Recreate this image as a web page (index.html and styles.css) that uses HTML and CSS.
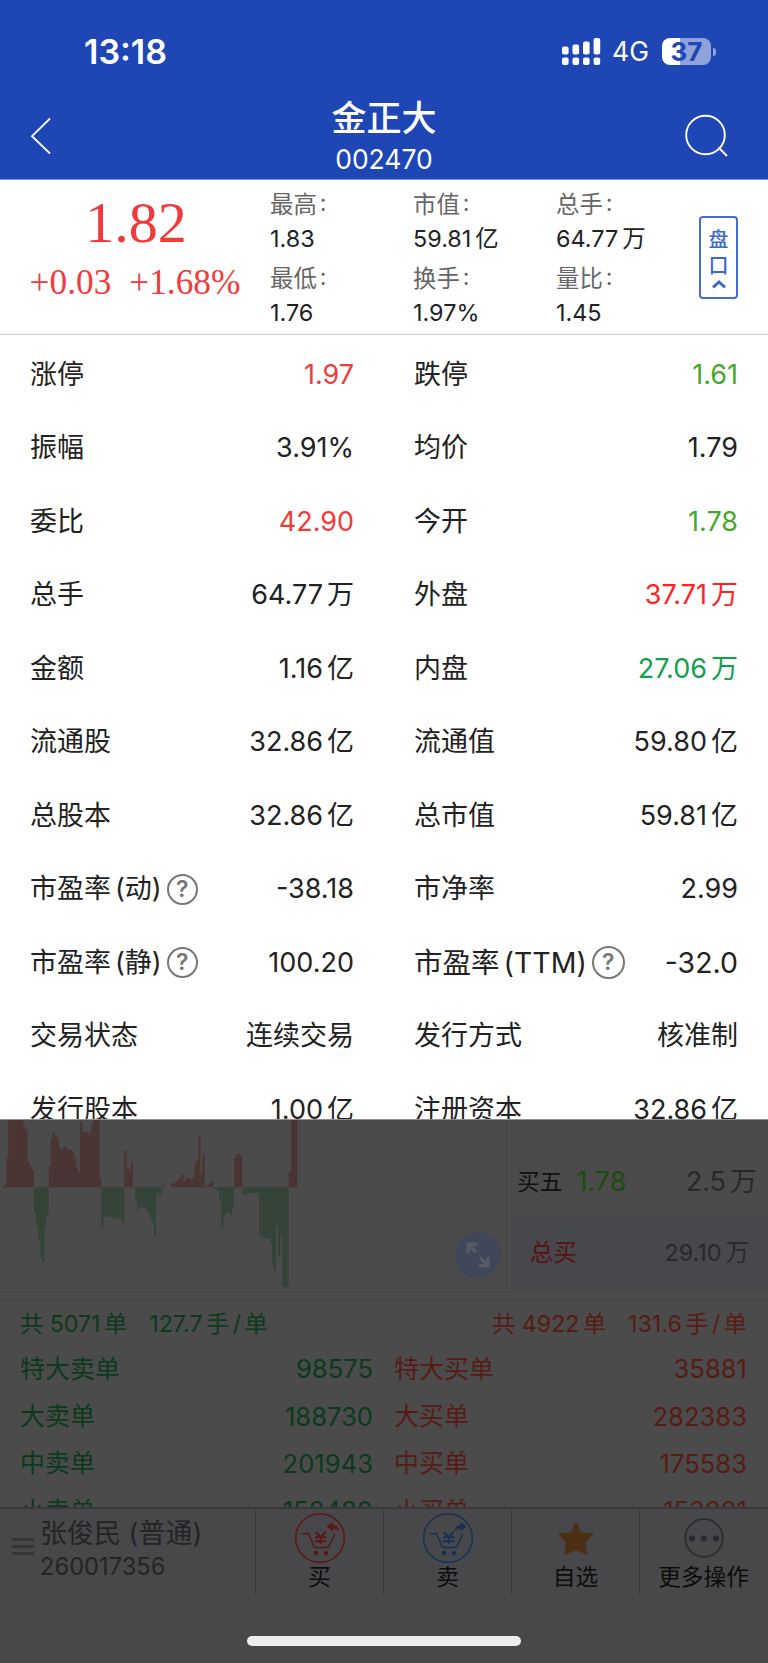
FILE: index.html
```html
<!DOCTYPE html>
<html lang="zh-CN">
	<head>
		<title>金正大 002470</title>
		<meta charset="utf-8">
		<link rel="stylesheet" href="styles.css">
	</head>
	<body>
		<header>
			<div class="status">
				<span class="clock">13:18</span>
				<div class="statusRight">
					<svg class="signal" width="39" height="28" viewBox="0 0 39 28" fill="#fff">
						<rect x="0" y="8.5" width="6.6" height="8" rx="2"/>
						<rect x="10.5" y="6.5" width="6.6" height="10" rx="2"/>
						<rect x="21" y="3.5" width="6.6" height="13" rx="2"/>
						<rect x="31.6" y="0" width="6.6" height="16.5" rx="2"/>
						<rect x="0" y="19.5" width="6.6" height="7.5" rx="2"/>
						<rect x="10.5" y="19.5" width="6.6" height="7.5" rx="2"/>
						<rect x="21" y="19.5" width="6.6" height="7.5" rx="2"/>
						<rect x="31.6" y="19.5" width="6.6" height="7.5" rx="2"/>
					</svg>
					<span class="net">4G</span>
					<div class="battery">37</div>
					<span class="nub"></span>
				</div>
			</div>
			<div class="nav">
				<svg width="24" height="42" viewBox="0 0 24 42" fill="none" stroke="#fff" stroke-width="1.8"><path d="M21 3.5L3 21.2L21 38.5"/></svg>
				<div class="title">
					<h1>金正大</h1>
					<p>002470</p>
				</div>
				<svg width="44" height="44" viewBox="0 0 44 44" fill="none" stroke="#fff" stroke-width="1.9"><circle cx="21.5" cy="21" r="19.3"/><path d="M34.5 33.5L43 42"/></svg>
			</div>
		</header>

		<section class="summary">
			<div class="price">
				<p class="last">1.82</p>
				<p class="change"><span>+0.03</span><span>+1.68%</span></p>
			</div>
			<div class="stats">
				<div><label>最高<i>:</i></label><b>1.83</b></div>
				<div><label>市值<i>:</i></label><b>59.81<u>亿</u></b></div>
				<div><label>总手<i>:</i></label><b>64.77<u>万</u></b></div>
				<div><label>最低<i>:</i></label><b>1.76</b></div>
				<div><label>换手<i>:</i></label><b>1.97%</b></div>
				<div><label>量比<i>:</i></label><b>1.45</b></div>
			</div>
			<div class="toggle">
				<span>盘</span>
				<span>口</span>
				<svg width="16" height="10" viewBox="0 0 16 10" fill="none" stroke="#3c69cb" stroke-width="3"><path d="M2 8.3L8 3L14 8.3"/></svg>
			</div>
		</section>

		<section class="detail">
			<div class="row"><span>涨停</span><b class="red">1.97</b></div>
			<div class="row"><span>跌停</span><b class="lime">1.61</b></div>
			<div class="row"><span>振幅</span><b>3.91%</b></div>
			<div class="row"><span>均价</span><b>1.79</b></div>
			<div class="row"><span>委比</span><b class="red">42.90</b></div>
			<div class="row"><span>今开</span><b class="lime">1.78</b></div>
			<div class="row"><span>总手</span><b>64.77<u>万</u></b></div>
			<div class="row"><span>外盘</span><b class="red2">37.71<u>万</u></b></div>
			<div class="row"><span>金额</span><b>1.16<u>亿</u></b></div>
			<div class="row"><span>内盘</span><b class="green">27.06<u>万</u></b></div>
			<div class="row"><span>流通股</span><b>32.86<u>亿</u></b></div>
			<div class="row"><span>流通值</span><b>59.80<u>亿</u></b></div>
			<div class="row"><span>总股本</span><b>32.86<u>亿</u></b></div>
			<div class="row"><span>总市值</span><b>59.81<u>亿</u></b></div>
			<div class="row"><span>市盈率<u>(动)</u></span><em class="help">?</em><b>-38.18</b></div>
			<div class="row"><span>市净率</span><b>2.99</b></div>
			<div class="row"><span>市盈率<u>(静)</u></span><em class="help">?</em><b>100.20</b></div>
			<div class="row big"><span>市盈率<u>(TTM)</u></span><em class="help">?</em><b>-32.0</b></div>
			<div class="row"><span>交易状态</span><b>连续交易</b></div>
			<div class="row"><span>发行方式</span><b>核准制</b></div>
			<div class="row"><span>发行股本</span><b>1.00<u>亿</u></b></div>
			<div class="row"><span>注册资本</span><b>32.86<u>亿</u></b></div>
		</section>

		<section class="under">
			<div class="market">
				<div class="chart">
					<!-- one step is one bar, 6.4 units wide -->
					<svg class="bars" width="310" height="170" viewBox="0 30 930 510">
						<path fill="#4b3434" d="M13 232V225H19V144H25V30H70V48H76V60H83V155H89V168H95V180H102V232ZM146 232V168H152V84H158V66H165V78H171V84H178V114H184V120H190V108H197V114H203V120H216V126H222V144H228V174H234V186H240V36H247V66H266V72H273V48H279V30H298V203H304V232ZM373 232V120H380V174H386V180H393V155H399V232ZM487 232V225H493V232ZM513 232V220H526V214H532V208H538V203H544V191H551V214H557V203H570V208H576V203H583V161H589V149H595V78H601V191H607V131H614V232ZM620 232V226H627V220H633V214H639V232ZM702 232V144H708V131H721V138H727V232ZM866 232V186H873V30H892V232Z"/>
						<path fill="#344438" d="M7 232V237H13V232ZM102 232V308H108V349H115V391H121V444H127V456H133V349H139V314H146V232ZM304 232V355H310V320H336V326H355V320H361V326H367V343H373V232ZM405 232V266H411V302H418V290H430V296H443V308H449V326H456V337H462V379H468V249H475V255H487V232ZM639 232V237H652V243H658V273H664V355H670V320H677V308H690V314H696V296H702V232ZM727 232V255H740V249H778V379H784V385H810V402H816V467H822V486H828V349H834V438H841V379H847V527H853V533H860V527H866V232Z"/>
					</svg>
					<svg class="expand" width="46" height="46" viewBox="0 0 46 46">
						<circle cx="23" cy="23" r="22.6" fill="#3f4758"/>
						<g fill="none" stroke="#565b66" stroke-width="3.4"><path d="M13 21V12.2H22M13 12.2L21 20.2M33 25V33.6H24M33 33.6L25 25.6"/></g>
					</svg>
				</div>
				<div class="book">
					<div class="buy5"><span>买五</span><span class="p">1.78</span><span class="v">2.5<u>万</u></span></div>
					<div class="total"><span>总买</span><span class="v">29.10<u>万</u></span></div>
				</div>
			</div>
			<div class="orders">
				<div class="sell">
					<p class="sum"><span>共 5071<u>单</u></span><span>127.7<u>手</u><u>/</u><u>单</u></span></p>
					<p><span>特大卖单</span><b>98575</b></p>
					<p><span>大卖单</span><b>188730</b></p>
					<p><span>中卖单</span><b>201943</b></p>
					<p><span>小卖单</span><b>158480</b></p>
				</div>
				<div class="buy">
					<p class="sum"><span>共 4922<u>单</u></span><span>131.6<u>手</u><u>/</u><u>单</u></span></p>
					<p><span>特大买单</span><b>35881</b></p>
					<p><span>大买单</span><b>282383</b></p>
					<p><span>中买单</span><b>175583</b></p>
					<p><span>小买单</span><b>153881</b></p>
				</div>
			</div>
		</section>

		<footer>
			<div class="tools">
				<div class="account">
					<div class="menu"><i></i><i></i><i></i></div>
					<div>
						<p class="name">张俊民 (普通)</p>
						<p class="num">260017356</p>
					</div>
				</div>
				<div class="tool">
					<svg width="52" height="52" viewBox="0 0 52 52" fill="none" stroke="#5b1616" stroke-width="1.5">
						<circle cx="26" cy="26" r="24.3"/>
						<path d="M8 21.7H14.5L20.5 35.5H34.5L41 22"/>
						<path stroke-width="2" d="M22 20L26.7 25.5L31.5 20M26.7 25.5V32M21 25.3H32.5M21 29.3H32.5"/>
						<g stroke="none" fill="#5b1616"><circle cx="22.3" cy="41" r="2.2"/><circle cx="32" cy="41" r="2.2"/><path d="M32.5 14.5L39 10V13C43 13.5 45 16 45 19.5C43.5 17.5 41.5 17 39 17V19.5Z"/></g>
					</svg>
					<p>买</p>
				</div>
				<div class="tool">
					<svg width="52" height="52" viewBox="0 0 52 52" fill="none" stroke="#173156" stroke-width="1.5">
						<circle cx="26" cy="26" r="24.3"/>
						<path d="M8 21.7H14.5L20.5 35.5H34.5L41 22"/>
						<path stroke-width="2" d="M22 20L26.7 25.5L31.5 20M26.7 25.5V32M21 25.3H32.5M21 29.3H32.5"/>
						<g stroke="none" fill="#173156"><circle cx="22.3" cy="41" r="2.2"/><circle cx="32" cy="41" r="2.2"/><path d="M44.5 14.5L38.5 10V13C34.5 13.5 33 16 32 19.5C34 17.5 36 17 38.5 17V19.5Z"/></g>
					</svg>
					<p>卖</p>
				</div>
				<div class="tool">
					<svg width="52" height="52" viewBox="0 0 52 52" fill="#4b2e13"><path d="M26 9L31.2 20L44 21.7L35.3 30.3L37.5 43.5L26 38L14.5 43.5L15.7 30.3L8 21.7L20.8 20Z"/></svg>
					<p>自选</p>
				</div>
				<div class="tool">
					<svg width="52" height="52" viewBox="0 0 52 52" fill="#262a33"><circle cx="26" cy="26" r="18.8" fill="none" stroke="#2b2d35" stroke-width="1.8"/><circle cx="14" cy="26.3" r="3.1"/><circle cx="25.8" cy="26.3" r="3.1"/><circle cx="38" cy="26.3" r="3.1"/></svg>
					<p>更多操作</p>
				</div>
			</div>
			<div class="home"></div>
		</footer>
	</body>
</html>
```
FILE: styles.css
```css
*{
	margin:0;
	padding:0;
	box-sizing:border-box;
}
body{
	width:768px;
	height:1663px;
	overflow:hidden;
	background-color:#fff;
	color:#222;
	font-family:Inter, "Noto Sans CJK SC", sans-serif;
	font-size:27px;
	line-height:1.4;
	display:flex;
	flex-direction:column;
}
b, i, em{
	font-weight:normal;
	font-style:normal;
}
/* unit after a number */
u{
	text-decoration:none;
	margin-left:4px;
}
svg{
	display:block;
	flex:none;
}

header{
	height:180px;
	background-color:#1e46b4;
	border-bottom:1px solid #7c90cc;
	color:#fff;
	flex:none;
}
.status{
	height:94px;
	padding:9px 52px 0 84px;
	display:flex;
	justify-content:space-between;
	align-items:center;
}
.clock{
	font-size:34px;
	font-weight:600;
	line-height:40px;
}
.statusRight{
	display:flex;
	align-items:center;
}
.net{
	font-size:26.5px;
	margin:0 13px 0 11px;
}
.battery{
	width:49px;
	height:27px;
	border-radius:8px;
	background:linear-gradient(90deg, #fff 18.5px, #8fa2d9 18.5px);
	color:#1e46b4;
	font-size:26px;
	font-weight:700;
	line-height:27px;
	text-align:center;
}
.nub{
	width:3px;
	height:8px;
	margin-left:2px;
	border-radius:0 4px 4px 0;
	background-color:#8fa2d9;
}
.nav{
	height:85px;
	padding:0 40px 1px 29px;
	display:flex;
	justify-content:space-between;
	align-items:center;
}
.title{
	text-align:center;
	margin-left:31px;
	padding-top:1px;
}
h1{
	font-size:35px;
	font-weight:500;
	line-height:44px;
}
.title p{
	font-size:26.5px;
	line-height:38px;
}

.summary{
	height:155px;
	border-bottom:1px solid #ccc;
	display:flex;
	flex:none;
}
.price{
	width:270px;
	color:#f23a3a;
	font-family:"Liberation Serif", serif;
	text-align:center;
}
.last{
	font-size:58px;
	line-height:64px;
	padding-top:11px;
	padding-left:2px;
}
.change{
	display:flex;
	justify-content:center;
	gap:18px;
	padding-top:3px;
	font-size:35.3px;
	line-height:50px;
}
.stats{
	width:429px;
	padding-top:8px;
	display:grid;
	grid-template-columns:143px 143px 143px;
	grid-auto-rows:73.5px;
}
.stats label, .stats b{
	display:block;
	font-size:23.4px;
	line-height:34px;
}
.stats label{
	color:#666;
}
.stats i{
	margin-left:3px;
	font-feature-settings:"case";
}
.toggle{
	width:39px;
	height:83px;
	margin-top:36px;
	padding-top:9px;
	border:2px solid #4470cc;
	border-radius:4px;
	color:#3c69cb;
	display:flex;
	flex-direction:column;
	align-items:center;
	font-size:20px;
	font-weight:500;
	line-height:26px;
}

.detail{
	height:785px;
	padding-top:3px;
	overflow:hidden;
	flex:none;
	display:grid;
	grid-template-columns:1fr 1fr;
	grid-auto-rows:73.5px;
	border-bottom:1px solid #909090;
}
.row{
	padding:0 30px;
	display:flex;
	align-items:center;
}
.row b{
	margin-left:auto;
}
.big{
	font-size:28.5px;
}
.red{
	color:#f23a3a;
}
.red2{
	color:#f22;
}
.lime{
	color:#45a928;
}
.green{
	color:#12a14b;
}
.help{
	width:31px;
	height:31px;
	margin-left:5px;
	border:2.5px solid #777;
	border-radius:50%;
	color:#777;
	font-size:23px;
	font-weight:600;
	line-height:27px;
	text-align:center;
}
.big .help{
	width:33px;
	height:33px;
	line-height:29px;
}

.under{
	height:387px;
	overflow:hidden;
	background-color:#4b4b4b;
	color:#27282b;
	flex:none;
}
.market{
	height:180px;
	border-bottom:1px solid #424346;
	display:flex;
}
.chart{
	width:512px;
	height:169px;
	border-right:1px solid #474749;
	border-bottom:1px solid #464749;
	position:relative;
}
.expand{
	position:absolute;
	left:454.5px;
	top:112px;
}
.book{
	width:256px;
}
.buy5{
	height:96px;
	padding:28px 11px 0 5px;
	display:flex;
	align-items:center;
	color:#111;
	font-size:22.7px;
}
.buy5 .p{
	margin-left:14px;
	color:#1b4d0d;
	font-size:27px;
}
.buy5 .v{
	font-size:27px;
}
.v{
	margin-left:auto;
	color:#27282b;
}
.total{
	height:74px;
	padding:0 19px 0 18px;
	background-color:#47484b;
	display:flex;
	align-items:center;
	font-size:23.4px;
	color:#5a1013;
}
.orders{
	display:flex;
	font-size:25px;
}
.sell{
	width:394px;
	padding:0 21px 0 20px;
	color:#0b391b;
}
.buy{
	width:374px;
	padding-right:21px;
	color:#571b14;
}
.orders p{
	height:47.3px;
	padding-bottom:1px;
	display:flex;
	justify-content:space-between;
	align-items:center;
}
.orders b{
	font-size:25.6px;
}
.orders .sum{
	height:46px;
	padding-top:3px;
	justify-content:flex-start;
	gap:22px;
	font-size:23.2px;
}
.sum u{
	margin-left:3.5px;
}
.buy .sum{
	justify-content:flex-end;
}

footer{
	height:156px;
	background-color:#48484a;
	border-top:2px solid #39393a;
	flex:none;
}
.tools{
	height:86px;
	display:flex;
}
.account{
	width:255px;
	padding-left:12px;
	display:flex;
	color:#242426;
}
.menu{
	width:22px;
	padding-top:29px;
	margin-right:6px;
}
.menu i{
	display:block;
	height:3px;
	margin-bottom:4px;
	background-color:#353536;
}
.name{
	padding-top:6px;
	line-height:38px;
}
.num{
	font-size:23.7px;
	line-height:28px;
}
.tool{
	width:128px;
	border-left:1px solid #3a3a3c;
	padding-top:3px;
	color:#0c0c0c;
	font-size:22.7px;
	text-align:center;
}
.tool svg{
	margin:0 auto;
}
.tool p{
	line-height:26px;
}
.home{
	width:274px;
	height:10px;
	margin:41px auto 0;
	border-radius:5px;
	background-color:#ededed;
}
```
